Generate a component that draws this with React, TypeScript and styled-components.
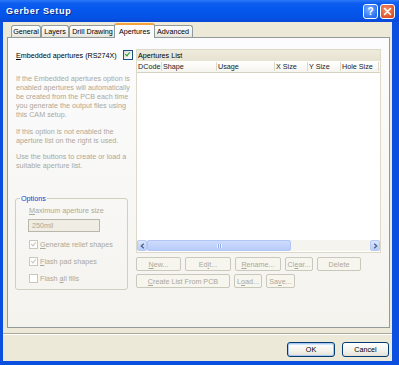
import React from "react";
import styled, { createGlobalStyle } from "styled-components";

const GlobalStyle = createGlobalStyle`
  html, body {
    margin: 0;
    padding: 0;
    background: #ffffff;
  }
  body {
    font-family: "Liberation Sans", Arial, sans-serif;
    font-size: 7.2px;
    color: #000000;
  }
`;

const tabs = [
    { label: "General", width: 30 },
    { label: "Layers", width: 28 },
    { label: "Drill Drawing", width: 47 },
    { label: "Apertures", width: 41, active: true },
    { label: "Advanced", width: 40 },
];

const columns = [
    { label: "DCode", width: 25 },
    { label: "Shape", width: 55 },
    { label: "Usage", width: 58 },
    { label: "X Size", width: 33 },
    { label: "Y Size", width: 33 },
    { label: "Hole Size", width: 38 },
];

export default function App() {
    return (
        <>
            <GlobalStyle />
            <Window>
                <TitleBar>
                    <Title>Gerber Setup</Title>
                    <CaptionButton>?</CaptionButton>
                    <CaptionButton $close>
                        <svg width="9" height="9" viewBox="0 0 9 9">
                            <path d="M1.5 1.5 L7.5 7.5 M7.5 1.5 L1.5 7.5" stroke="#fff" strokeWidth="1.6" strokeLinecap="round" />
                        </svg>
                    </CaptionButton>
                </TitleBar>
                <Frame>
                    <Body>
                        <TabRow>
                            {tabs.map((t) => (
                                <Tab key={t.label} $width={t.width} $active={t.active}>
                                    {t.label}
                                </Tab>
                            ))}
                        </TabRow>
                        <Panel>
                            <LeftColumn>
                                <EmbeddedRow>
                                    <span>
                                        <u>E</u>mbedded apertures (RS274X)
                                    </span>
                                    <CheckBox $checked />
                                </EmbeddedRow>
                                <Description>
                                    If the Embedded apertures option is
                                    <br />
                                    enabled apertures will automatically
                                    <br />
                                    be created from the PCB each time
                                    <br />
                                    you generate the output files using
                                    <br />
                                    this CAM setup.
                                </Description>
                                <Description>
                                    If this option is not enabled the
                                    <br />
                                    aperture list on the right is used.
                                </Description>
                                <Description>
                                    Use the buttons to create or load a
                                    <br />
                                    suitable aperture list.
                                </Description>
                                <Group>
                                    <GroupLabel>Options</GroupLabel>
                                    <GrayText>
                                        <u>M</u>aximum aperture size
                                    </GrayText>
                                    <SizeInput>250mil</SizeInput>
                                    <OptionRow>
                                        <CheckBox $checked $disabled />
                                        <GrayText>
                                            <u>G</u>enerate relief shapes
                                        </GrayText>
                                    </OptionRow>
                                    <OptionRow>
                                        <CheckBox $checked $disabled />
                                        <GrayText>
                                            <u>F</u>lash pad shapes
                                        </GrayText>
                                    </OptionRow>
                                    <OptionRow>
                                        <CheckBox $disabled />
                                        <GrayText>
                                            Flash <u>a</u>ll fills
                                        </GrayText>
                                    </OptionRow>
                                </Group>
                            </LeftColumn>
                            <RightColumn>
                                <ListBox>
                                    <ListCaption>Apertures List</ListCaption>
                                    <HeaderRow>
                                        {columns.map((c) => (
                                            <HeaderCell key={c.label} $width={c.width}>
                                                {c.label}
                                            </HeaderCell>
                                        ))}
                                    </HeaderRow>
                                    <ListBody />
                                    <ScrollBar>
                                        <ScrollArrow>
                                            <svg width="5" height="6" viewBox="0 0 5 6">
                                                <path d="M3.8 0.8 L1.3 3 L3.8 5.2" stroke="#4d6185" strokeWidth="1.3" fill="none" />
                                            </svg>
                                        </ScrollArrow>
                                        <ScrollThumb>
                                            <Grip />
                                        </ScrollThumb>
                                        <ScrollTrack />
                                        <ScrollArrow>
                                            <svg width="5" height="6" viewBox="0 0 5 6">
                                                <path d="M1.2 0.8 L3.7 3 L1.2 5.2" stroke="#4d6185" strokeWidth="1.3" fill="none" />
                                            </svg>
                                        </ScrollArrow>
                                    </ScrollBar>
                                </ListBox>
                                <ButtonRow>
                                    <FlatButton $width={45}>
                                        <u>N</u>ew...
                                    </FlatButton>
                                    <FlatButton $width={46}>
                                        Ed<u>i</u>t...
                                    </FlatButton>
                                    <FlatButton $width={46}>
                                        <u>R</u>ename...
                                    </FlatButton>
                                    <FlatButton $width={28}>
                                        Cl<u>e</u>ar...
                                    </FlatButton>
                                    <FlatButton $width={44}>Delete</FlatButton>
                                </ButtonRow>
                                <ButtonRow>
                                    <FlatButton $width={94}>
                                        <u>C</u>reate List From PCB
                                    </FlatButton>
                                    <FlatButton $width={28}>
                                        L<u>o</u>ad...
                                    </FlatButton>
                                    <FlatButton $width={29}>
                                        Sa<u>v</u>e...
                                    </FlatButton>
                                </ButtonRow>
                            </RightColumn>
                        </Panel>
                        <Separator />
                        <Footer>
                            <DialogButton $default>OK</DialogButton>
                            <DialogButton>Cancel</DialogButton>
                        </Footer>
                    </Body>
                </Frame>
            </Window>
        </>
    );
}

const Window = styled.div`
    width: 399px;
    height: 365px;
    display: flex;
    flex-direction: column;
    background: #0a4fe0;
    overflow: hidden;
`;

const TitleBar = styled.div`
    height: 22px;
    flex: none;
    display: flex;
    align-items: center;
    gap: 2px;
    padding: 0 4px 0 6px;
    box-sizing: border-box;
    background: linear-gradient(
        to bottom,
        #2b78f6 0%,
        #0d5df0 15%,
        #0456ec 50%,
        #0553e6 80%,
        #0a48d6 100%
    );
`;

const Title = styled.span`
    flex: 1;
    color: #ffffff;
    font-weight: bold;
    font-size: 9px;
    letter-spacing: 0.7px;
    text-shadow: 1px 1px 0 #0a2a8a;
`;

const CaptionButton = styled.div<{ $close?: boolean }>`
    width: 15px;
    height: 15px;
    box-sizing: border-box;
    border: 1px solid #ffffff;
    border-radius: 3px;
    display: flex;
    align-items: center;
    justify-content: center;
    color: #ffffff;
    font-weight: bold;
    font-size: 10px;
    background: ${(p) =>
        p.$close
            ? "radial-gradient(circle at 40% 35%, #f0906c, #e1542a 70%, #c9401e)"
            : "radial-gradient(circle at 40% 35%, #7fb0ff, #2d74f2 70%, #1a5ce0)"};
`;

const Frame = styled.div`
    flex: 1;
    display: flex;
    padding: 0 7px 4px 3px;
    min-height: 0;
`;

const Body = styled.div`
    flex: 1;
    display: flex;
    flex-direction: column;
    background: #ece9d8;
    padding: 1px 2px 4px 4px;
    min-width: 0;
`;

const TabRow = styled.div`
    height: 14px;
    flex: none;
    display: flex;
    align-items: flex-end;
    padding-left: 4px;
`;

const Tab = styled.div<{ $width: number; $active?: boolean }>`
    position: relative;
    width: ${(p) => p.$width}px;
    height: ${(p) => (p.$active ? 15 : 12)}px;
    margin: ${(p) => (p.$active ? "0 -2px -1px -2px" : "0")};
    z-index: ${(p) => (p.$active ? 1 : 0)};
    box-sizing: border-box;
    border: 1px solid #919b9c;
    border-bottom: none;
    border-top: ${(p) => (p.$active ? "2px solid #f3a33c" : "1px solid #919b9c")};
    border-radius: 3px 3px 0 0;
    background: ${(p) =>
        p.$active ? "#fcfcfe" : "linear-gradient(to bottom, #ffffff, #f0efe8 70%, #e6e4d8)"};
    display: flex;
    align-items: center;
    justify-content: center;
    white-space: nowrap;
    padding-bottom: ${(p) => (p.$active ? 1 : 0)}px;
`;

const Panel = styled.div`
    flex: 1;
    min-height: 0;
    box-sizing: border-box;
    border: 1px solid #919b9c;
    background: linear-gradient(to bottom, #fcfcfe, #f4f3ee);
    padding: 11px 8px 0 8px;
    display: grid;
    grid-template-columns: 118px 1fr;
    column-gap: 2px;
    align-items: start;
`;

const LeftColumn = styled.div`
    display: flex;
    flex-direction: column;
`;

const EmbeddedRow = styled.div`
    height: 12px;
    display: flex;
    align-items: center;
    justify-content: space-between;
    padding-right: 1px;
    white-space: nowrap;
`;

const CheckBox = styled.span<{ $checked?: boolean; $disabled?: boolean }>`
    flex: none;
    width: ${(p) => (p.$disabled ? 9 : 10)}px;
    height: ${(p) => (p.$disabled ? 9 : 10)}px;
    box-sizing: border-box;
    border: 1px solid ${(p) => (p.$disabled ? "#cac8bb" : "#1c5180")};
    background: ${(p) =>
        p.$disabled ? "#ffffff" : "linear-gradient(135deg, #dcdcd7, #ffffff)"};
    position: relative;

    &::after {
        content: "";
        display: ${(p) => (p.$checked ? "block" : "none")};
        position: absolute;
        left: 2px;
        top: 0px;
        width: 2px;
        height: 4px;
        border: solid ${(p) => (p.$disabled ? "#c6c4b6" : "#21a121")};
        border-width: 0 1.5px 1.5px 0;
        transform: rotate(40deg);
    }
`;

const Description = styled.p`
    margin: 0 0 7.5px;
    color: #aca899;
    line-height: 9px;
    white-space: nowrap;

    &:first-of-type {
        margin-top: 13px;
    }

    &:last-of-type {
        margin-bottom: 0;
    }
`;

const Group = styled.fieldset`
    margin: 24px 0 0 -1px;
    width: 113px;
    box-sizing: border-box;
    border: 1px solid #d0d0bf;
    border-radius: 3px;
    padding: 0 6px 6.5px 13px;
    display: flex;
    flex-direction: column;
    align-items: flex-start;
`;

const GroupLabel = styled.legend`
    color: #0046d5;
    line-height: 9px;
    padding: 0 1px;
    margin-left: -9px;
`;

const GrayText = styled.span`
    color: #aca899;
    line-height: 9px;
    white-space: nowrap;
    margin-top: 3px;
`;

const SizeInput = styled.div`
    margin-top: 3.5px;
    margin-left: -1px;
    width: 72px;
    height: 13px;
    box-sizing: border-box;
    border: 1px solid #b9b7ab;
    background: #efede4;
    color: #aca899;
    padding-left: 3px;
    line-height: 11px;
`;

const OptionRow = styled.div`
    height: 9px;
    display: flex;
    align-items: center;
    gap: 2px;
    margin-top: 8px;

    &:first-of-type {
        margin-top: 5.5px;
    }

    ${GrayText} {
        margin-top: 0;
    }
`;

const RightColumn = styled.div`
    display: flex;
    flex-direction: column;
    gap: 3px;
`;

const ListBox = styled.div`
    height: 204px;
    display: flex;
    flex-direction: column;
    box-sizing: border-box;
    border: 1px solid #dcd9c8;
    background: #ffffff;
    margin-bottom: 1px;
`;

const ListCaption = styled.div`
    height: 11px;
    flex: none;
    background: linear-gradient(to bottom, #eeebdc, #e6e3d1);
    padding-left: 1px;
    line-height: 11px;
`;

const HeaderRow = styled.div`
    height: 12px;
    flex: none;
    display: flex;
    background: linear-gradient(to bottom, #ffffff, #f5f4ee);
    border-bottom: 1px solid #d6d2c2;
    box-sizing: border-box;
`;

const HeaderCell = styled.div<{ $width: number }>`
    width: ${(p) => p.$width}px;
    box-sizing: border-box;
    padding-left: 1px;
    line-height: 11px;
    color: #222222;
    white-space: nowrap;
    border-right: 1px solid #ddd9ca;
    margin: 1px 0;
    line-height: 9px;
`;

const ListBody = styled.div`
    flex: 1;
    background: #ffffff;
`;

const ScrollBar = styled.div`
    height: 11px;
    flex: none;
    display: flex;
    background: #f5f4ef;
    margin-bottom: 1px;
`;

const ScrollArrow = styled.div`
    width: 10px;
    height: 11px;
    box-sizing: border-box;
    border: 1px solid #b8cbf6;
    border-radius: 2px;
    background: linear-gradient(to bottom, #dbe6fd, #b9cdf9);
    display: flex;
    align-items: center;
    justify-content: center;
`;

const ScrollThumb = styled.div`
    width: 144px;
    height: 11px;
    box-sizing: border-box;
    border: 1px solid #b2c6f5;
    border-radius: 2px;
    background: linear-gradient(to bottom, #cddbfd, #b9cdfa);
    display: flex;
    align-items: center;
    justify-content: center;
`;

const Grip = styled.div`
    width: 5px;
    height: 4px;
    background: repeating-linear-gradient(to right, #eef3ff 0 1px, #8ca8e6 1px 2px);
`;

const ScrollTrack = styled.div`
    flex: 1;
`;

const ButtonRow = styled.div`
    display: flex;
    gap: 4px;
`;

const FlatButton = styled.div<{ $width: number }>`
    width: ${(p) => p.$width}px;
    height: 14px;
    box-sizing: border-box;
    border: 1px solid #cac8bb;
    border-radius: 2px;
    background: #f6f5ee;
    color: #aca899;
    display: flex;
    align-items: center;
    justify-content: center;
    white-space: nowrap;
`;

const Separator = styled.div`
    flex: none;
    margin: 5px -2px 0 -4px;
    height: 0;
    border-top: 1px solid #aca899;
    border-bottom: 1px solid #ffffff;
`;

const Footer = styled.div`
    flex: none;
    display: flex;
    justify-content: flex-end;
    gap: 7px;
    margin-top: 7px;
    padding-right: 1px;
`;

const DialogButton = styled.div<{ $default?: boolean }>`
    width: ${(p) => (p.$default ? 48 : 47)}px;
    height: 15px;
    box-sizing: border-box;
    border: 1px solid #003c74;
    border-radius: 3px;
    background: linear-gradient(to bottom, #ffffff, #f3f2ec 60%, #e3e1d6);
    box-shadow: ${(p) =>
        p.$default ? "inset 0 0 0 1px #a9c5f0, inset 0 1px 0 1px #cee7ff" : "none"};
    display: flex;
    align-items: center;
    justify-content: center;
`;
